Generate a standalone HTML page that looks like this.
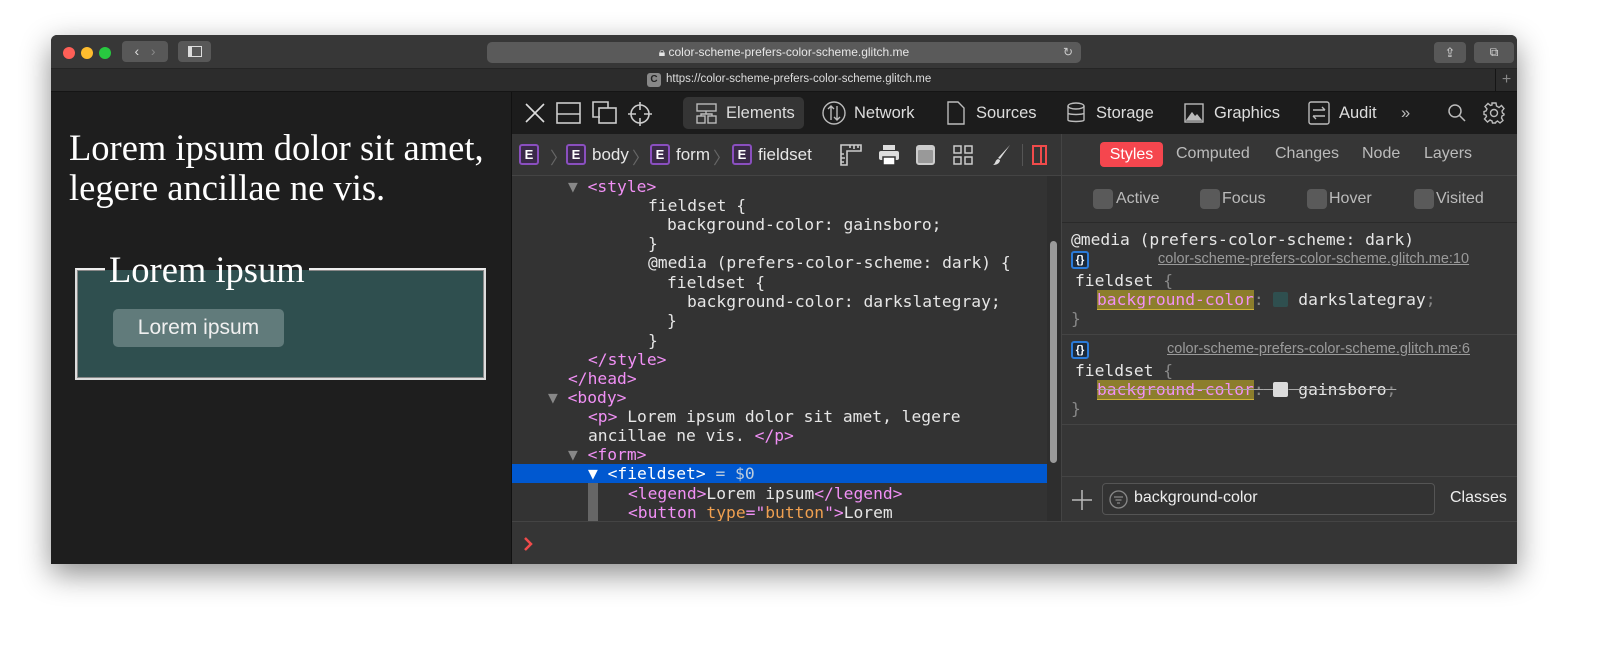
<!DOCTYPE html>
<html><head><meta charset="utf-8"><style>
*{box-sizing:border-box;margin:0;padding:0}
body{width:1600px;height:645px;background:#fff;position:relative;overflow:hidden;font-family:"Liberation Sans",sans-serif}
.win{position:absolute;left:51px;top:35px;width:1466px;height:529px;background:#1e1e1e;border-radius:6px 6px 0 0;box-shadow:0 10px 30px rgba(0,0,0,.45);overflow:hidden}
.title{position:absolute;left:0;top:0;width:100%;height:34px;background:#373737;border-bottom:1px solid #252525}
.tabs{position:absolute;left:0;top:34px;width:100%;height:23px;background:#2c2c2c;border-bottom:1px solid #151515}
.dot{position:absolute;top:12px;width:12px;height:12px;border-radius:50%}
.btn{position:absolute;background:#585858;border-radius:4px;color:#ddd;text-align:center}
.url{position:absolute;left:436px;top:7px;width:594px;height:21px;background:#5a5a5a;border-radius:5px;color:#e6e6e6;font-size:12px;text-align:center;line-height:21px}
.page{position:absolute;left:0;top:57px;width:459px;height:472px;background:#1e1e1e;color:#fff;font-family:"Liberation Serif",serif}
.dt{position:absolute;left:460px;top:57px;width:1006px;height:472px;background:#333;border-left:1px solid #111}
.tb{position:absolute;left:0;top:0;width:100%;height:42px;background:#1c1c1c;color:#ddd;font-size:16.5px}
.tb span{position:absolute;top:12px}
.tb svg,.bc svg{position:absolute}
.bc{position:absolute;left:0;top:42px;width:549px;height:42px;background:#353535;border-bottom:1px solid #444;color:#e6e6e6;font-size:17px}
.e{position:absolute;top:10px;width:20px;height:21px;border:2px solid #8a4fbf;background:#3a2a48;border-radius:3px;color:#fff;font-size:13px;font-weight:bold;text-align:center;line-height:17px}
.dom{position:absolute;left:0;top:84px;width:549px;height:345px;background:#333;font-family:"DejaVu Sans Mono","Liberation Mono",monospace;font-size:16.3px;color:#e6e6e6;overflow:hidden}
.dom div{position:absolute;white-space:pre;height:19px;line-height:19px}
.t{color:#f190f5}
.sel{left:0;width:535px;background:#0058d0}
.side{position:absolute;left:549px;top:42px;width:457px;height:387px;background:#363636;border-left:1px solid #444}
.mono{font-family:"DejaVu Sans Mono","Liberation Mono",monospace;font-size:16.3px;color:#e6e6e6;white-space:pre}
.lnk{position:absolute;color:#9a9a9a;font-size:14.5px;text-decoration:underline}
.hl{background:#8c7e2c;color:#f190f5;border-bottom:1px solid #d0b23a}
.cb{position:absolute;top:13px;width:20px;height:20px;background:#5a5a5a;border-radius:4px}
.brace{position:absolute;width:18px;height:18px;border:2px solid #2a7bd9;background:#1c2a3a;border-radius:3px;color:#fff;font-size:11px;font-weight:bold;text-align:center;line-height:14px}
</style></head><body>
<div class="win">
 <div class="title">
  <div class="dot" style="left:12px;background:#fe5f57"></div>
  <div class="dot" style="left:30px;background:#febc2e"></div>
  <div class="dot" style="left:48px;background:#28c840"></div>
  <div class="btn" style="left:71px;top:6px;width:46px;height:21px;font-size:14px;line-height:21px">‹&nbsp;&nbsp;&nbsp;<span style="color:#888">›</span></div>
  <div class="btn" style="left:127px;top:6px;width:33px;height:21px"><div style="margin:5px auto;width:14px;height:11px;border:1.5px solid #ddd;border-left-width:4px"></div></div>
  <div class="url">🔒︎ color-scheme-prefers-color-scheme.glitch.me<span style="position:absolute;right:8px;color:#ccc">↻</span></div>
  <div class="btn" style="left:1383px;top:7px;width:32px;height:21px;font-size:13px;line-height:21px">⇪</div>
  <div class="btn" style="left:1423px;top:7px;width:40px;height:21px;font-size:12px;line-height:21px">⧉</div>
 </div>
 <div class="tabs">
  <div style="position:absolute;left:596px;top:4px;width:14px;height:14px;background:#888;border-radius:3px;color:#222;font-size:10px;font-weight:bold;text-align:center;line-height:14px">C</div>
  <div style="position:absolute;left:615px;top:4px;color:#ddd;font-size:11.5px">https://color-scheme-prefers-color-scheme.glitch.me</div>
  <div style="position:absolute;left:1444px;top:0;width:22px;height:23px;border-left:1px solid #151515;color:#888;text-align:center;font-size:16px;line-height:22px">+</div>
 </div>
 <div class="page">
  <div style="position:absolute;left:18px;top:36px;font-size:36.5px;line-height:40px">Lorem ipsum dolor sit amet,<br>legere ancillae ne vis.</div>
  <div style="position:absolute;left:24px;top:176px;width:411px;height:112px;background:#2f4f4f;border:2px solid #ddd;border-top-color:#eee;box-shadow:inset 1px 1px 0 #888,inset -1px -1px 0 #888"></div>
  <div style="position:absolute;left:54px;top:158px;padding:0 4px;font-size:36.5px;line-height:40px;background:linear-gradient(#1e1e1e 50%,#2f4f4f 50%)">Lorem ipsum</div>
  <div style="position:absolute;left:62px;top:217px;width:171px;height:38px;background:#617b7b;border-radius:5px;color:#f0f0f0;font-family:'Liberation Sans',sans-serif;font-size:21px;text-align:center;line-height:38px">Lorem ipsum</div>
 </div>
 <div class="dt">
  <div class="tb">
   <svg style="left:13px;top:11px" width="20" height="20" viewBox="0 0 20 20" stroke="#ddd" stroke-width="1.6" fill="none"><path d="M1 1L19 19M19 1L1 19"/></svg>
   <svg style="left:44px;top:10px" width="26" height="22" viewBox="0 0 26 22" stroke="#ccc" stroke-width="1.6" fill="none"><rect x="1" y="1" width="23" height="20"/><path d="M1 12H24"/></svg>
   <svg style="left:80px;top:9px" width="26" height="24" viewBox="0 0 26 24" stroke="#ccc" stroke-width="1.6" fill="none"><path d="M8 16H1V1H16V7"/><rect x="7" y="7" width="17" height="15"/></svg>
   <svg style="left:116px;top:10px" width="24" height="24" viewBox="0 0 24 24" stroke="#ccc" stroke-width="1.6" fill="none"><circle cx="12" cy="12" r="9"/><path d="M12 0V8M12 16V24M0 12H8M16 12H24"/></svg>
   <div style="position:absolute;left:171px;top:5px;width:121px;height:32px;background:#353535;border-radius:5px"></div>
   <svg style="left:184px;top:11px" width="21" height="21" viewBox="0 0 21 21" stroke="#bbb" stroke-width="1.4" fill="none"><rect x="1" y="1" width="19" height="7"/><rect x="1" y="13" width="8" height="7"/><rect x="12" y="13" width="8" height="7"/><path d="M10 8V11M5 13V11H16V13"/></svg>
   <span style="left:214px">Elements</span>
   <svg style="left:310px;top:9px" width="24" height="24" viewBox="0 0 24 24" stroke="#bbb" stroke-width="1.4" fill="none"><circle cx="12" cy="12" r="11"/><path d="M9 5V19M6 8L9 5L12 8M15 5V19M12 16L15 19L18 16"/></svg>
   <span style="left:342px">Network</span>
   <svg style="left:435px;top:9px" width="18" height="24" viewBox="0 0 18 24" stroke="#bbb" stroke-width="1.4" fill="none"><path d="M1 1H11L17 7V23H1Z"/></svg>
   <span style="left:464px">Sources</span>
   <svg style="left:555px;top:10px" width="18" height="22" viewBox="0 0 18 22" stroke="#bbb" stroke-width="1.4" fill="none"><ellipse cx="9" cy="4" rx="8" ry="3"/><path d="M1 4V18C1 20 17 20 17 18V4M1 11C1 13 17 13 17 11"/></svg>
   <span style="left:584px">Storage</span>
   <svg style="left:672px;top:11px" width="20" height="20" viewBox="0 0 20 20" stroke="#bbb" stroke-width="1.4" fill="none"><rect x="1" y="1" width="18" height="18"/><path d="M3 17L8 10L11 14L13 12L17 17Z" fill="#bbb"/></svg>
   <span style="left:702px">Graphics</span>
   <svg style="left:796px;top:9px" width="22" height="24" viewBox="0 0 22 24" stroke="#bbb" stroke-width="1.4" fill="none"><rect x="1" y="1" width="20" height="22" rx="2"/><path d="M5 9H17M14 6L17 9M17 15H5M8 18L5 15"/></svg>
   <span style="left:827px">Audit</span>
   <span style="left:889px;color:#bbb">»</span>
   <svg style="left:936px;top:12px" width="18" height="18" viewBox="0 0 18 18" stroke="#bbb" stroke-width="1.5" fill="none"><circle cx="7" cy="7" r="6"/><path d="M11 11L17 17"/></svg>
   <svg style="left:971px;top:10px" width="22" height="22" viewBox="0 0 22 22" stroke="#bbb" stroke-width="1.4" fill="none"><path d="M9 1H13L13.5 4L16 5.5L18.5 3.5L21 6.5L19 9L19.5 11L21 12V13L19 14L18.5 16L20 18.5L17 21L14.5 19L13 20L12.5 21H9.5L9 19L7 18L4.5 20L1.5 17L3.5 14.5L3 13L1 12.5V9.5L3 9L4 7L2 4.5L5 1.5L7.5 3.5L9 3Z"/><circle cx="11" cy="11" r="3.5"/></svg>
  </div>
  <div class="bc">
   <div class="e" style="left:7px">E</div><span style="position:absolute;left:38px;top:10px;color:#666">〉</span>
   <div class="e" style="left:54px">E</div><span style="position:absolute;left:80px;top:11px">body</span><span style="position:absolute;left:120px;top:10px;color:#666">〉</span>
   <div class="e" style="left:138px">E</div><span style="position:absolute;left:164px;top:11px">form</span><span style="position:absolute;left:201px;top:10px;color:#666">〉</span>
   <div class="e" style="left:220px">E</div><span style="position:absolute;left:246px;top:11px">fieldset</span>
   <svg style="left:328px;top:10px" width="22" height="22" viewBox="0 0 22 22" stroke="#ccc" stroke-width="1.6" fill="none"><path d="M1 21V1H21V7H7V21Z"/><path d="M10 1V4M14 1V5M18 1V4M1 10H4M1 14H5M1 18H4"/></svg>
   <svg style="left:366px;top:10px" width="22" height="22" viewBox="0 0 22 22" fill="#ddd"><rect x="5" y="1" width="12" height="5"/><rect x="1" y="7" width="20" height="9" rx="2"/><rect x="5" y="13" width="12" height="8" fill="#fff" stroke="#353535" stroke-width="1.5"/></svg>
   <div style="position:absolute;left:404px;top:11px;width:19px;height:20px;border:2px solid #ccc;border-radius:3px;background:#999;box-shadow:inset 0 3px 0 #ccc"></div>
   <svg style="left:441px;top:11px" width="20" height="20" viewBox="0 0 20 20" stroke="#ccc" stroke-width="1.5" fill="none"><rect x="1" y="1" width="7" height="7"/><rect x="12" y="1" width="7" height="7"/><rect x="1" y="12" width="7" height="7"/><rect x="12" y="12" width="7" height="7"/></svg>
   <svg style="left:480px;top:10px" width="20" height="22" viewBox="0 0 20 22"><path d="M18 1L8 15L6 14Z" fill="#ddd"/><path d="M6 15C3 16 4 19 1 21C5 21 8 19 8 16Z" fill="#ddd"/></svg>
   <div style="position:absolute;left:510px;top:10px;height:22px;border-left:1px solid #555"></div>
   <div style="position:absolute;left:520px;top:11px;width:15px;height:20px;border:2px solid #f04b4b"><div style="margin-left:6px;height:100%;border-left:2px solid #f04b4b"></div></div>
  </div>
  <div class="dom">
   <div style="left:56px;top:1px"><span style="color:#888">▼</span> <span class="t">&lt;style&gt;</span></div>
   <div style="left:136px;top:20px">fieldset {</div>
   <div style="left:155px;top:39px">background-color: gainsboro;</div>
   <div style="left:136px;top:58px">}</div>
   <div style="left:136px;top:77px">@media (prefers-color-scheme: dark) {</div>
   <div style="left:155px;top:97px">fieldset {</div>
   <div style="left:175px;top:116px">background-color: darkslategray;</div>
   <div style="left:155px;top:135px">}</div>
   <div style="left:136px;top:155px">}</div>
   <div style="left:76px;top:174px" class="t">&lt;/style&gt;</div>
   <div style="left:56px;top:193px" class="t">&lt;/head&gt;</div>
   <div style="left:36px;top:212px"><span style="color:#888">▼</span> <span class="t">&lt;body&gt;</span></div>
   <div style="left:76px;top:231px"><span class="t">&lt;p&gt;</span> Lorem ipsum dolor sit amet, legere</div>
   <div style="left:76px;top:250px">ancillae ne vis. <span class="t">&lt;/p&gt;</span></div>
   <div style="left:56px;top:269px"><span style="color:#888">▼</span> <span class="t">&lt;form&gt;</span></div>
   <div class="sel" style="top:288px"><span style="padding-left:76px;color:#fff">▼ &lt;fieldset&gt; <span style="color:#bcd">= $0</span></span></div>
   <div style="left:76px;top:307px;width:10px;height:40px;background:#666"></div>
   <div style="left:116px;top:308px"><span class="t">&lt;legend&gt;</span>Lorem ipsum<span class="t">&lt;/legend&gt;</span></div>
   <div style="left:116px;top:327px"><span class="t">&lt;button </span><span style="color:#f0a050">type</span><span class="t">="</span><span style="color:#f0a050">button</span><span class="t">"&gt;</span>Lorem</div>
   <div style="left:535px;top:0;width:14px;height:345px;background:#2e2e2e"></div>
   <div style="left:538px;top:65px;width:7px;height:222px;background:#9a9a9a;border-radius:4px"></div>
  </div>
  <div class="side">
   <div style="position:absolute;left:0;top:0;width:100%;height:42px;border-bottom:1px solid #444;font-size:16px;color:#bbb">
    <div style="position:absolute;left:38px;top:8px;width:63px;height:25px;background:#f5464e;border-radius:4px;color:#fff;text-align:center;line-height:25px">Styles</div>
    <span style="position:absolute;left:114px;top:11px">Computed</span>
    <span style="position:absolute;left:213px;top:11px">Changes</span>
    <span style="position:absolute;left:300px;top:11px">Node</span>
    <span style="position:absolute;left:362px;top:11px">Layers</span>
   </div>
   <div style="position:absolute;left:0;top:42px;width:100%;height:47px;border-bottom:1px solid #2a2a2a;font-size:16px;color:#bbb">
    <div class="cb" style="left:31px"></div><span style="position:absolute;left:54px;top:14px">Active</span>
    <div class="cb" style="left:138px"></div><span style="position:absolute;left:160px;top:14px">Focus</span>
    <div class="cb" style="left:245px"></div><span style="position:absolute;left:267px;top:14px">Hover</span>
    <div class="cb" style="left:352px"></div><span style="position:absolute;left:374px;top:14px">Visited</span>
   </div>
   <div style="position:absolute;left:0;top:89px;width:100%;height:112px;border-bottom:1px solid #444"></div>
   <div class="mono" style="position:absolute;left:9px;top:96px">@media (prefers-color-scheme: dark)</div>
   <div class="brace" style="left:9px;top:117px">{}</div>
   <div class="lnk" style="left:96px;top:117px">color-scheme-prefers-color-scheme.glitch.me:10</div>
   <div class="mono" style="position:absolute;left:13px;top:137px">fieldset <span style="color:#888">{</span></div>
   <div class="mono" style="position:absolute;left:35px;top:156px"><span class="hl">background-color</span><span style="color:#888">:</span> <span style="display:inline-block;width:15px;height:15px;background:#2f4f4f;border-radius:2px;vertical-align:-2px"></span> darkslategray<span style="color:#888">;</span></div>
   <div class="mono" style="position:absolute;left:9px;top:175px;color:#888">}</div>
   <div style="position:absolute;left:0;top:201px;width:100%;height:90px;border-bottom:1px solid #444"></div>
   <div class="brace" style="left:9px;top:207px">{}</div>
   <div class="lnk" style="left:105px;top:207px">color-scheme-prefers-color-scheme.glitch.me:6</div>
   <div class="mono" style="position:absolute;left:13px;top:227px">fieldset <span style="color:#888">{</span></div>
   <div class="mono" style="position:absolute;left:35px;top:246px;text-decoration:line-through;text-decoration-color:#aaa"><span class="hl">background-color</span><span style="color:#888">:</span> <span style="display:inline-block;width:15px;height:15px;background:#dcdcdc;border-radius:2px;vertical-align:-2px"></span> gainsboro<span style="color:#888">;</span></div>
   <div class="mono" style="position:absolute;left:9px;top:265px;color:#888">}</div>
   <div style="position:absolute;left:0;top:342px;width:100%;height:45px;border-top:1px solid #444">
    <svg style="position:absolute;left:10px;top:13px" width="20" height="20" viewBox="0 0 20 20" stroke="#bbb" stroke-width="1.5"><path d="M10 0V20M0 10H20"/></svg>
    <div style="position:absolute;left:40px;top:6px;width:333px;height:32px;border:1px solid #555;border-radius:4px;background:#333"></div>
    <svg style="position:absolute;left:47px;top:13px" width="19" height="19" viewBox="0 0 19 19" stroke="#888" stroke-width="1.3" fill="none"><circle cx="9.5" cy="9.5" r="8.5"/><path d="M5 7H14M6.5 10H12.5M8 13H11"/></svg>
    <span style="position:absolute;left:72px;top:12px;color:#eee;font-size:16px">background-color</span>
    <span style="position:absolute;left:388px;top:12px;color:#eee;font-size:16px">Classes</span>
   </div>
  </div>
  <div style="position:absolute;left:0;top:429px;width:100%;height:43px;background:#353535;border-top:1px solid #444">
   <svg style="position:absolute;left:11px;top:15px" width="10" height="14" viewBox="0 0 10 14" stroke="#f04b4b" stroke-width="2.5" fill="none"><path d="M2 1L8 7L2 13"/></svg>
  </div>
 </div>
</div>
</body></html>
